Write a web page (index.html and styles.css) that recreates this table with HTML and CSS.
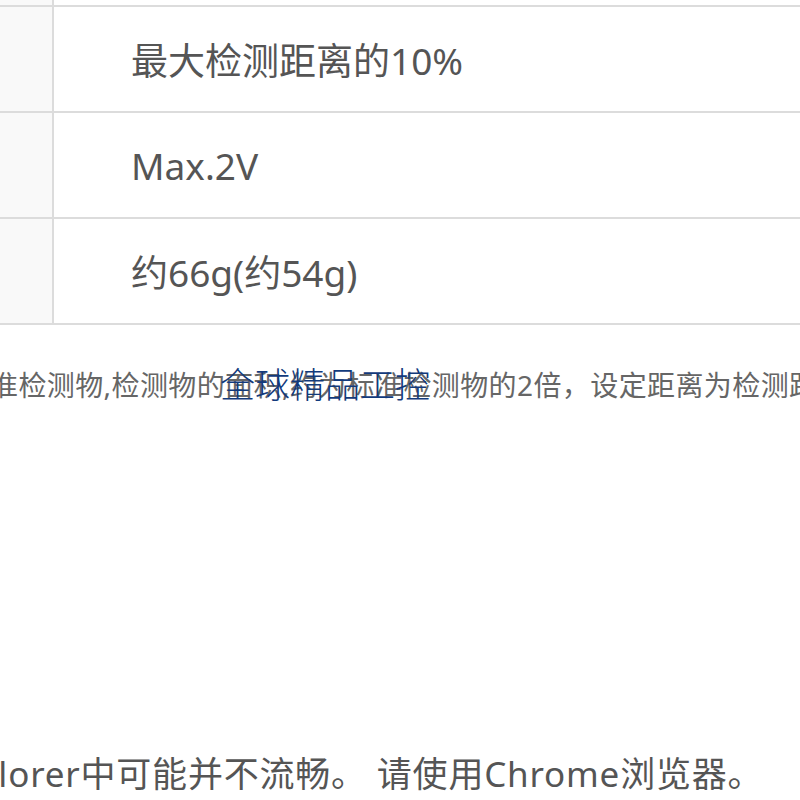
FILE: index.html
```html
<!DOCTYPE html>
<html lang="zh">
<head>
    <meta charset="UTF-8">
    <meta name="viewport" content="width=device-width, initial-scale=1.0">
    <title>规格</title>
    <link rel="stylesheet" href="styles.css">
</head>
<body>
    <div class="page">
        <div class="spec-table">
            <div class="spec-row spec-row-top">
                <div class="spec-label"></div>
                <div class="spec-value"></div>
            </div>
            <div class="spec-row">
                <div class="spec-label"></div>
                <div class="spec-value">最大检测距离的10%</div>
            </div>
            <div class="spec-row">
                <div class="spec-label"></div>
                <div class="spec-value">Max.2V</div>
            </div>
            <div class="spec-row">
                <div class="spec-label"></div>
                <div class="spec-value">约66g(约54g)</div>
            </div>
        </div>

        <div class="note-wrap">
            <p class="note">准检测物,检测物的面积,约为标准检测物的2倍，设定距离为检测距离的70%</p>
            <div class="watermark">全球精品工控</div>
        </div>

        <p class="browser-tip">plorer中可能并不流畅。 请使用Chrome浏览器。</p>
    </div>
</body>
</html>
```

FILE: styles.css
```css
body {
    margin: 0;
    background: #fff;
    font-family: "Noto Sans", "Noto Sans CJK SC", sans-serif;
    color: #555;
    overflow: hidden;
}

.page {
    width: 800px;
    height: 800px;
    overflow: hidden;
}

.spec-table {
    width: 900px;
}

.spec-row {
    display: grid;
    grid-template-columns: 54px 1fr;
    height: 104px;
    border-bottom: 2px solid #dcdcdc;
}

.spec-row-top {
    height: 5px;
}

.spec-label {
    background: #f9f9f9;
    border-right: 2px solid #dcdcdc;
}

.spec-value {
    display: flex;
    align-items: center;
    padding-left: 77px;
    font-size: 37px;
    white-space: nowrap;
}

.note-wrap {
    position: relative;
    margin-top: 42px;
}

.note {
    margin: 0;
    font-size: 28px;
    line-height: 36px;
    letter-spacing: 0.4px;
    white-space: nowrap;
    text-indent: -10px;
    color: #666;
}

/* 水印，压在说明文字上 */
.watermark {
    position: absolute;
    top: -4px;
    left: 220px;
    font-size: 35px;
    line-height: 40px;
    color: #123a7c;
    font-family: "Noto Sans CJK SC", serif;
    font-weight: 300;
}

.browser-tip {
    margin: 351px 0 0;
    font-size: 35px;
    line-height: 40px;
    letter-spacing: 0.8px;
    white-space: nowrap;
    text-indent: -24px;
}
```
